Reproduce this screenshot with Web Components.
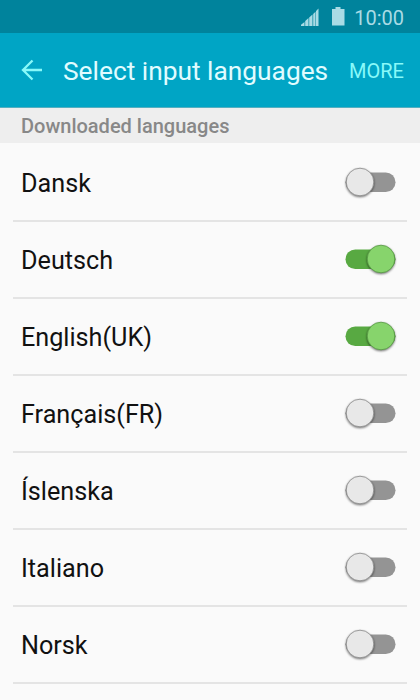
<!DOCTYPE html>
<html lang="en">
<head>
    <meta charset="UTF-8">
    <meta name="viewport" content="width=device-width, initial-scale=1.0">
    <title>Select input languages</title>
    <style>
        :root {
            --status-color: #00839c;
            --bar-color: #00a5c5;
            --page-color: #fafafa;
        }

        body {
            margin: 0;
            height: 700px;
            overflow: hidden;
            display: flex;
            flex-direction: column;
            background-color: var(--page-color);
            color: #111111;
            font-family: Roboto, sans-serif;
        }
    </style>
</head>
<body>
    <status-bar>10:00</status-bar>
    <app-bar action="MORE">Select input languages</app-bar>
    <section-title>Downloaded languages</section-title>
    <main>
        <language-row>Dansk</language-row>
        <language-row checked>Deutsch</language-row>
        <language-row checked>English(UK)</language-row>
        <language-row>Français(FR)</language-row>
        <language-row>Íslenska</language-row>
        <language-row>Italiano</language-row>
        <language-row>Norsk</language-row>
    </main>

    <script>
        class StatusBar extends HTMLElement {
            constructor() {
                super();
                this.attachShadow({ mode: 'open' }).innerHTML = `
                    <style>
                        :host {
                            display: flex;
                            justify-content: flex-end;
                            height: 33px;
                            flex: none;
                            box-sizing: border-box;
                            padding-right: 16px;
                            background-color: var(--status-color);
                            color: #a9dbe5;
                            font-size: 20px;
                            line-height: 36px;
                        }
                        svg { margin-right: 7px; }
                        span { white-space: nowrap; }
                    </style>
                    <svg width="48" height="33" viewBox="0 0 48 33" fill="currentColor">
                        <path d="M2 26v-1.200L5.500 22v4zM6.200 26v-5l3.300-3v8zM10.200 26v-8.500l3.300-3V26zM14.200 26V14l2.300-2.300V26zM17 26V11L19.500 8.500V26z"/>
                        <path d="M33 9h3.500V7h5v2H45.500v16.500H33z"/>
                    </svg>
                    <span><slot></slot></span>
                `;
            }
        }

        class AppBar extends HTMLElement {
            constructor() {
                super();
                this.attachShadow({ mode: 'open' });
            }

            connectedCallback() {
                this.shadowRoot.innerHTML = `
                    <style>
                        :host {
                            display: flex;
                            align-items: center;
                            height: 75px;
                            flex: none;
                            box-sizing: border-box;
                            padding: 0 16px 0 20px;
                            background-color: var(--bar-color);
                            border-bottom: 1px solid #55afc0;
                            color: #e0fcff;
                        }
                        svg { margin-right: 19px; }
                        h1 {
                            flex: 1;
                            margin: 0;
                            padding-top: 1px;
                            font-size: 26.3px;
                            line-height: 32px;
                            font-weight: 400;
                            white-space: nowrap;
                        }
                        button {
                            padding: 1px 0 0;
                            border: none;
                            background: none;
                            color: #88f9f9;
                            font: 20px/24px Roboto, sans-serif;
                        }
                    </style>
                    <svg width="24" height="24" viewBox="0 0 24 24" fill="none" stroke="#88f9f9" stroke-width="2.300">
                        <path d="M12.500 2.500L3 12l9.500 9.500M3 12h19"/>
                    </svg>
                    <h1><slot></slot></h1>
                    <button>${this.getAttribute('action')}</button>
                `;
            }
        }

        class SectionTitle extends HTMLElement {
            constructor() {
                super();
                this.attachShadow({ mode: 'open' }).innerHTML = `
                    <style>
                        :host {
                            display: block;
                            height: 35px;
                            flex: none;
                            padding-left: 21px;
                            background-color: #eeeeee;
                            color: #888888;
                            font-size: 20px;
                            font-weight: 500;
                            line-height: 36px;
                        }
                    </style>
                    <slot></slot>
                `;
            }
        }

        class ToggleSwitch extends HTMLElement {
            constructor() {
                super();
                this.attachShadow({ mode: 'open' });
            }

            connectedCallback() {
                const on = this.hasAttribute('checked');
                const x = on ? 37 : 16;
                this.shadowRoot.innerHTML = `
                    <style>
                        :host { display: block; height: 38px; }
                        svg { display: block; overflow: visible; }
                        .knob { filter: drop-shadow(0 1.5px 1px rgba(0, 0, 0, 0.55)); }
                    </style>
                    <svg width="54" height="36" viewBox="0 0 54 36">
                        <rect x="1.500" y="8.500" width="50" height="19.500" rx="9.750" fill="${on ? '#58a942' : '#949494'}"/>
                        <circle class="knob" cx="${x}" cy="18" r="13.800" fill="${on ? '#87d46c' : '#e8e8e8'}" stroke="${on ? '#579944' : '#8a8a8a'}" stroke-width="0.800"/>
                    </svg>
                `;
            }
        }

        class LanguageRow extends HTMLElement {
            constructor() {
                super();
                this.attachShadow({ mode: 'open' });
            }

            connectedCallback() {
                this.shadowRoot.innerHTML = `
                    <style>
                        :host {
                            display: flex;
                            align-items: center;
                            justify-content: space-between;
                            height: 77px;
                            box-sizing: border-box;
                            margin: 0 13px;
                            padding: 0 9px 0 8px;
                            border-bottom: 2px solid #e4e4e4;
                            font-size: 25.2px;
                            line-height: 30px;
                        }
                        :host(:first-child) { margin-top: 2px; }
                        span { padding-top: 3px; }
                    </style>
                    <span><slot></slot></span>
                    <toggle-switch ${this.hasAttribute('checked') ? 'checked' : ''}></toggle-switch>
                `;
            }
        }

        customElements.define('status-bar', StatusBar);
        customElements.define('app-bar', AppBar);
        customElements.define('section-title', SectionTitle);
        customElements.define('toggle-switch', ToggleSwitch);
        customElements.define('language-row', LanguageRow);
    </script>
</body>
</html>
